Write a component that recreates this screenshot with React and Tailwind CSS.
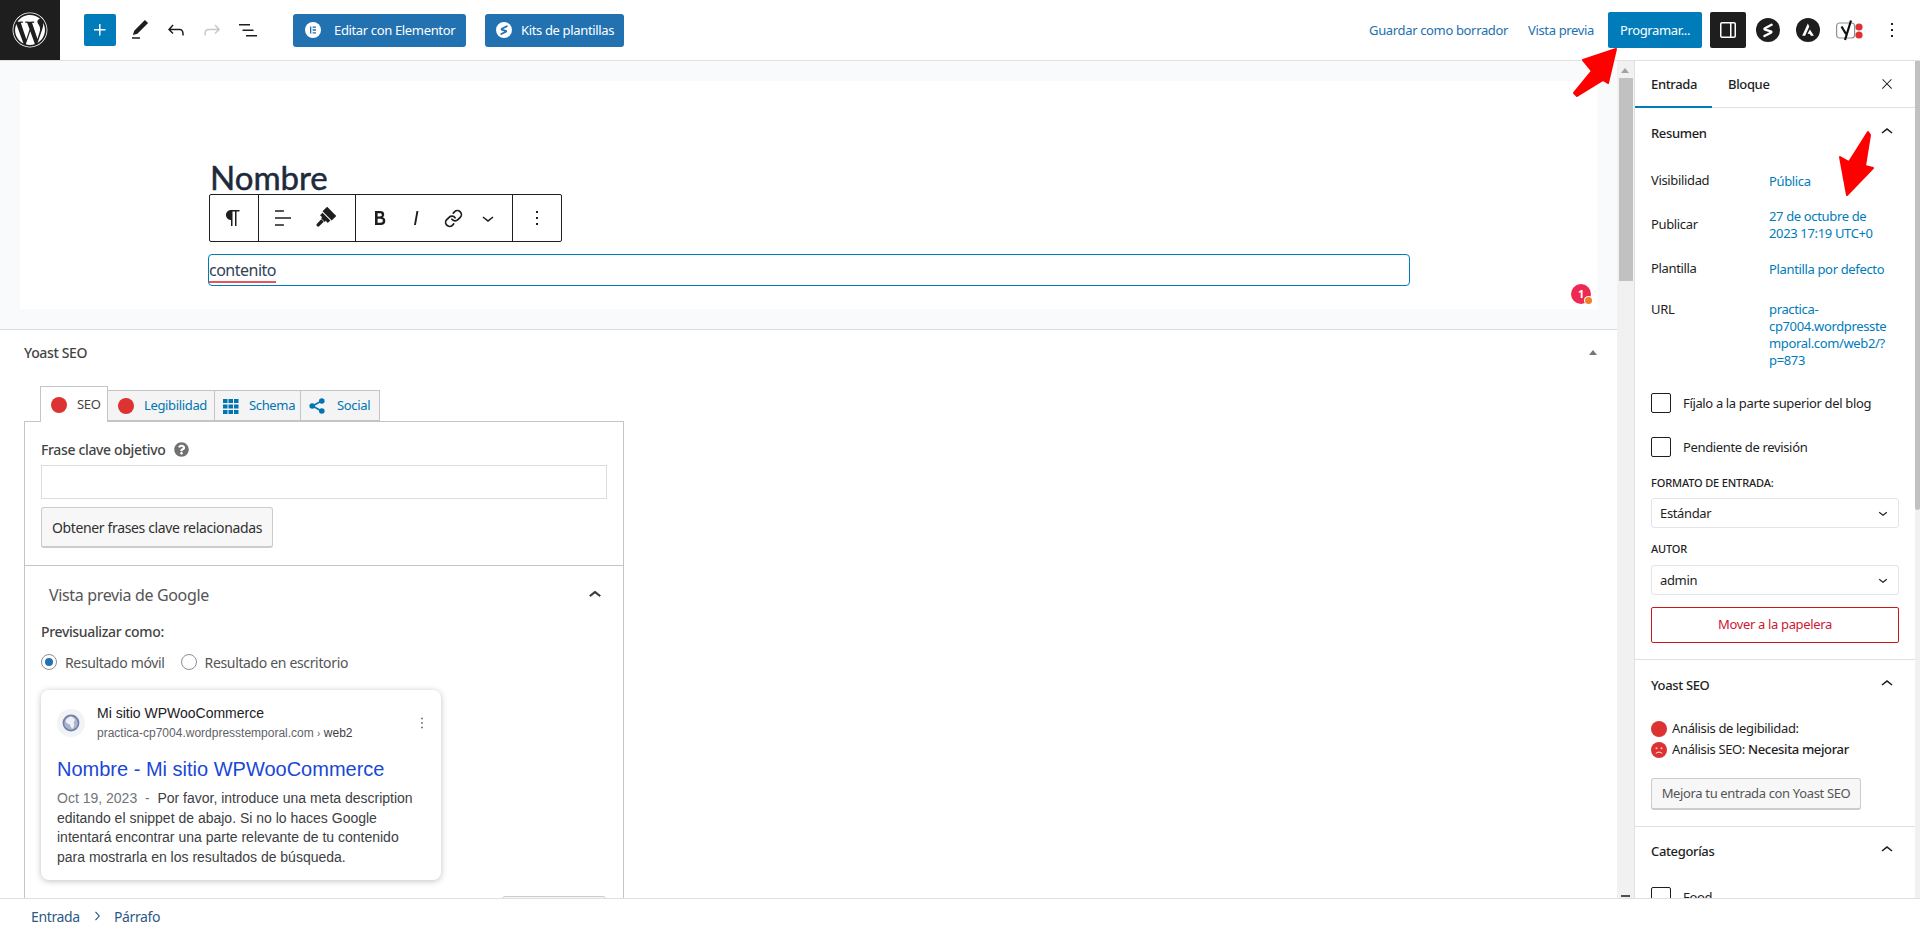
import React from "react";
import { FaWordpress, FaQuestionCircle } from "react-icons/fa";
import { Link as LinkIcon } from "lucide-react";

const Wp = ({ d, className = "w-6 h-6" }) => (
  <svg viewBox="0 0 24 24" className={className} fill="currentColor">
    <path d={d} />
  </svg>
);

const icons = {
  plus: "M11 12.5V17.5H12.5V12.5H17.5V11H12.5V6H11V11H6V12.5H11Z",
  edit: "M20.1 5.1L16.9 2 6.2 12.7l-1.3 4.4 4.5-1.3L20.1 5.1zM4 20.8h8v-1.5H4v1.5z",
  undo: "M18.3 11.7c-.6-.6-1.4-.9-2.3-.9H6.7l2.9-3.3-1.1-1-4.5 5L8.5 16l1-1-2.7-2.7H16c.5 0 .9.2 1.3.5 1 1 1 3.4 1 4.5v.3h1.5v-.2c0-1.5 0-4.3-1.5-5.7z",
  redo: "M15.6 6.5l-1.1 1 2.9 3.3H8c-.9 0-1.7.3-2.3.9-1.4 1.5-1.4 4.2-1.4 5.6v.2h1.5v-.3c0-1.1 0-3.5 1-4.5.3-.3.7-.5 1.3-.5h9.2L14.5 15l1.1 1.1 4.6-4.6-4.6-5z",
  list: "M3 6h11v1.5H3V6zm3.5 5.5h11V13h-11v-1.5zM21 17H10v1.5h11V17z",
  sidebar: "M18 4H6c-1.1 0-2 .9-2 2v12c0 1.1.9 2 2 2h12c1.1 0 2-.9 2-2V6c0-1.1-.9-2-2-2zm-4 14.5H6c-.3 0-.5-.2-.5-.5V6c0-.3.2-.5.5-.5h8v13zm4.5-.5c0 .3-.2.5-.5.5h-2.5v-13H18c.3 0 .5.2.5.5v12z",
  more: "M13 19h-2v-2h2v2zm0-6h-2v-2h2v2zm0-6h-2V5h2v2z",
  close: "M13 11.8l6.1-6.3-1-1-6.1 6.2-6.1-6.2-1 1 6.1 6.3-6.5 6.7 1 1 6.5-6.6 6.5 6.6 1-1z",
  up: "M6.5 12.4L12 8l5.5 4.4-.9 1.2L12 10l-4.5 3.6-1-1.2z",
  down: "M17.5 11.6L12 16l-5.5-4.4.9-1.2L12 14l4.5-3.6 1 1.2z",
  bold: "M14.7 11.3c1-.6 1.5-1.6 1.5-3 0-2.3-1.3-3.4-4-3.4H7v14h5.8c1.4 0 2.5-.3 3.3-1 .8-.7 1.2-1.7 1.2-2.9.1-1.9-.8-3.1-2.6-3.7zm-5.1-4h2.3c.6 0 1.1.1 1.4.4.3.3.5.7.5 1.2s-.2 1-.5 1.2c-.3.3-.8.4-1.4.4H9.6V7.3zm4.6 9c-.4.3-1 .4-1.7.4H9.6v-3.9h2.9c.7 0 1.3.2 1.7.5.4.3.6.8.6 1.5s-.2 1.2-.6 1.5z",
  italic: "M12.5 5L10 19h1.9l2.5-14z",
  para: "m9.99609 14v-.2251l.00391.0001v6.225h1.5v-14.5h2.5v14.5h1.5v-14.5h3v-1.5h-8.50391c-2.76142 0-5 2.23858-5 5 0 2.7614 2.23858 5 5 5z",
  align: "M4 19.8h8.9v-1.5H4v1.5zm8.9-15.6H4v1.5h8.9V4.2zm-8.9 7v1.5h16v-1.5H4z",
};

const BrushIcon = () => (
  <svg viewBox="0 0 24 24" className="w-6 h-6" fill="currentColor">
    <g transform="rotate(45 12 12)">
      <path d="M5.500 2.500h13v6.500h-13z" />
      <path d="M6.500 10h11v3.500h-3v1.500h-5v-1.500h-3z" />
      <path d="M10.300 15.500h3.400v6.200a1.700 1.700 0 0 1-3.400 0z" />
    </g>
  </svg>
);

const ElementorLogo = () => (
  <svg viewBox="0 0 16 16" className="w-4 h-4">
    <circle cx="8" cy="8" r="8" fill="#fff" />
    <path d="M5 4.500h1.300v7H5zM7.600 4.500h3.400v1.300H7.600zM7.600 7.350h3.400v1.300H7.600zM7.600 10.200h3.400v1.300H7.600z" fill="#2271b1" />
  </svg>
);

const KitsLogo = () => (
  <svg viewBox="0 0 16 16" className="w-4 h-4">
    <circle cx="8" cy="8" r="8" fill="#fff" />
    <path d="M10.800 4.200L6 6.700c-.6.3-.5.9.1 1.100l3.700 1c.6.2.6.700.1 1L5.300 12" fill="none" stroke="#2271b1" strokeWidth="1.800" strokeLinecap="round" strokeLinejoin="round" />
  </svg>
);

const StrattiLogo = () => (
  <svg viewBox="0 0 24 24" className="w-6 h-6">
    <circle cx="12" cy="12" r="12" fill="#1e1e1e" />
    <path d="M15.600 6.800L9 10.200c-.8.4-.7 1.200.1 1.500l5.700 1.600c.8.300.9 1 .1 1.400L8.400 18" fill="none" stroke="#fff" strokeWidth="2.400" strokeLinecap="round" strokeLinejoin="round" />
  </svg>
);

const AstraLogo = () => (
  <svg viewBox="0 0 24 24" className="w-6 h-6">
    <circle cx="12" cy="12" r="12" fill="#1e1e1e" />
    <path d="M11.800 5.500L6.200 17.800h2.900l4.200-9.200zM13.900 11.600l-2.300 4.200 2.300.1.900 1.900h3.100z" fill="#fff" />
  </svg>
);

const YoastLogo = () => (
  <svg viewBox="0 0 32 24" className="w-8 h-6">
    <rect x=".6" y="5" width="18" height="15" rx="3" fill="none" stroke="#8c8f94" strokeWidth="1.200" />
    <path d="M5.500 8.500l4.500 7.500M15 2.500L9 22" fill="none" stroke="#111" strokeWidth="2.200" />
    <circle cx="23" cy="9" r="3.600" fill="#dc3232" />
    <circle cx="23" cy="17" r="3.600" fill="#dc3232" />
  </svg>
);

const Dot = ({ className = "w-4 h-4" }) => <span className={`${className} rounded-full bg-[#dc3232] shrink-0`} />;

const GridIcon = () => (
  <svg viewBox="0 0 16 16" className="w-4 h-4" fill="#0075b3">
    {[0, 5.5, 11].map((y) =>
      [0, 5.5, 11].map((x) => <rect key={`${x}-${y}`} x={x} y={y + 1} width="4.5" height="4" />)
    )}
  </svg>
);

const ShareIcon = () => (
  <svg viewBox="0 0 16 16" className="w-4 h-4" fill="#0075b3">
    <path d="M12.500 3L3.500 8l9 5" fill="none" stroke="#0075b3" strokeWidth="1.600" />
    <circle cx="12.800" cy="3" r="2.800" />
    <circle cx="3.200" cy="8" r="2.800" />
    <circle cx="12.800" cy="13" r="2.800" />
  </svg>
);

const SadFace = () => (
  <svg viewBox="0 0 16 16" className="w-4 h-4 shrink-0">
    <circle cx="8" cy="8" r="8" fill="#dc3232" />
    <circle cx="5.500" cy="6.200" r="1" fill="#fff" opacity=".75" />
    <circle cx="10.500" cy="6.200" r="1" fill="#fff" opacity=".75" />
    <path d="M4.800 11.500c1.600-1.900 4.800-1.900 6.400 0" fill="none" stroke="#fff" strokeWidth="1.100" opacity=".75" />
  </svg>
);

const Globe = () => (
  <svg viewBox="0 0 18 18" className="w-[18px] h-[18px]">
    <circle cx="9" cy="9" r="7.600" fill="#a9b4cf" stroke="#6f7fa8" strokeWidth="1.600" />
    <path d="M9 2.500c3 1 4.500 3 3.500 4.500-1 1.300-1 1.500-.3 3 .5 1.500-.7 3.800-2.200 5-.6-2-2-2.500-2-4.500C6 9.500 4 9.500 3.500 7 4.500 4.500 6.500 3 9 2.500z" fill="#eef0f6" />
  </svg>
);

const Arrow = ({ className, viewBox, points }) => (
  <svg className={`absolute pointer-events-none ${className}`} viewBox={viewBox}>
    <polygon points={points} fill="#ff0000" stroke="#ff0000" strokeWidth="2" strokeLinejoin="round" />
  </svg>
);

const ToolBtn = ({ children, className = "" }) => (
  <span className={`absolute top-0 bottom-0 flex items-center justify-center ${className}`}>{children}</span>
);

const Select = ({ value }) => (
  <div className="h-[30px] rounded-[3px] border border-[#e2e4e7] flex items-center justify-between pl-2 pr-1.5 text-[#1e1e1e]">
    <span className="translate-y-px">{value}</span>
    <Wp d={icons.down} className="w-[18px] h-[18px]" />
  </div>
);

const Row = ({ label, children, className = "h-[44px] items-center" }) => (
  <div className={`flex ${className}`}>
    <span className="w-[118px] shrink-0 text-[#1e1e1e] translate-y-px">{label}</span>
    <span className="text-[#007cba] leading-[17px] translate-y-px">{children}</span>
  </div>
);

const Check = ({ label }) => (
  <div className="flex items-center h-5">
    <span className="w-5 h-5 rounded-[2px] border border-[#1e1e1e] mr-3 shrink-0" />
    <span className="text-[#1e1e1e] translate-y-px">{label}</span>
  </div>
);

const SectionHead = ({ title, className = "" }) => (
  <div className={`h-[50px] flex items-center justify-between ${className}`}>
    <span className="font-medium text-[#1e1e1e]">{title}</span>
    <Wp d={icons.up} className="w-6 h-6 -translate-y-0.5 text-[#1e1e1e]" />
  </div>
);

export default function App() {
  return (
    <div className="relative w-[1920px] h-[933px] overflow-hidden flex flex-col bg-white font-['Noto_Sans',sans-serif] text-[13px] tracking-[-0.35px] text-[#1e1e1e]">
      {/* barra superior */}
      <header className="h-[61px] shrink-0 border-b border-[#e0e0e0] flex items-center">
        <div className="w-[60px] h-[60px] bg-[#1e1e1e] flex items-center justify-center text-white">
          <FaWordpress className="w-9 h-9" />
        </div>
        <button className="ml-6 w-8 h-8 rounded-[2px] bg-[#007cba] text-white flex items-center justify-center">
          <Wp d={icons.plus} />
        </button>
        <div className="ml-3 flex items-center gap-3">
          <Wp d={icons.edit} />
          <Wp d={icons.undo} />
          <span className="text-[#c8c8c8]"><Wp d={icons.redo} /></span>
          <Wp d={icons.list} />
        </div>
        <button className="ml-[33px] h-[33px] w-[173px] rounded-[3px] bg-[#2271b1] text-white flex items-center pl-3">
          <ElementorLogo />
          <span className="ml-[13px] translate-y-px">Editar con Elementor</span>
        </button>
        <button className="ml-[19px] h-[33px] w-[139px] rounded-[3px] bg-[#2271b1] text-white flex items-center pl-[11px]">
          <KitsLogo />
          <span className="ml-[9px] translate-y-px">Kits de plantillas</span>
        </button>
        <div className="ml-auto flex items-center pr-4">
          <span className="text-[#2271b1] translate-y-px">Guardar como borrador</span>
          <span className="ml-5 text-[#2271b1] translate-y-px">Vista previa</span>
          <button className="ml-3.5 w-[94px] h-9 rounded-[2px] bg-[#007cba] text-white"><span className="inline-block translate-y-px">Programar...</span></button>
          <button className="ml-2 w-9 h-9 rounded-[2px] bg-[#1e1e1e] text-white flex items-center justify-center">
            <Wp d={icons.sidebar} />
          </button>
          <span className="ml-2.5"><StrattiLogo /></span>
          <span className="ml-4"><AstraLogo /></span>
          <span className="ml-4"><YoastLogo /></span>
          <span className="ml-3"><Wp d={icons.more} /></span>
        </div>
      </header>

      <div className="flex-1 min-h-0 flex">
        {/* columna del editor */}
        <main className="w-[1617px] shrink-0 overflow-hidden flex flex-col">
          <div className="h-[269px] shrink-0 bg-[#f9fafc] border-b border-[#dcdcde] pt-5 px-5">
            <div className="relative h-[228px] bg-white pl-[188px] pt-[75px]">
              <h1 className="h-[38px] leading-[38px] ml-[2px] text-[33px] font-['Lato',sans-serif] font-normal [-webkit-text-stroke:0.5px_#1e293b] translate-y-0.5 tracking-normal text-[#1e293b]">Nombre</h1>
              <div className="relative ml-[1px] w-[353px] h-[48px] bg-white border border-[#1e1e1e] rounded-[2px] text-[#1e1e1e]">
                <span className="absolute left-[48px] top-0 bottom-0 w-px bg-[#1e1e1e]" />
                <span className="absolute left-[145px] top-0 bottom-0 w-px bg-[#1e1e1e]" />
                <span className="absolute left-[302px] top-0 bottom-0 w-px bg-[#1e1e1e]" />
                <ToolBtn className="left-[11px] w-6"><Wp d={icons.para} /></ToolBtn>
                <ToolBtn className="left-[61px] w-6"><Wp d={icons.align} /></ToolBtn>
                <ToolBtn className="left-[103px] w-6"><BrushIcon /></ToolBtn>
                <ToolBtn className="left-[158px] w-6"><Wp d={icons.bold} /></ToolBtn>
                <ToolBtn className="left-[194px] w-6"><Wp d={icons.italic} /></ToolBtn>
                <ToolBtn className="left-[231px] w-6"><LinkIcon className="w-[19px] h-[19px]" strokeWidth={2.2} /></ToolBtn>
                <ToolBtn className="left-[266px] w-6"><Wp d={icons.down} /></ToolBtn>
                <ToolBtn className="left-[315px] w-6"><Wp d={icons.more} /></ToolBtn>
              </div>
              <div className="mt-3 w-[1202px] h-8 border-[1.5px] border-[#007cba] rounded-[4px] flex items-center text-[16px] tracking-[-0.5px] text-[#334155]">
                <span className="border-b-2 border-[#e8545f] leading-[21px] translate-y-[1px]">contenito</span>
              </div>
              <span className="absolute left-[1551px] top-[203px] w-5 h-5 rounded-full bg-[#ee2a52] text-white text-[11px] font-bold flex items-center justify-center">1</span>
              <span className="absolute left-[1565px] top-[216px] w-[7px] h-[7px] rounded-full bg-[#f08028] ring-1 ring-white" />
            </div>
          </div>

          <div className="flex-1 min-h-0 overflow-hidden">
            <div className="h-[44px] pl-6 pr-5 flex items-center justify-between">
              <span className="text-[14px] text-[#444] font-medium">Yoast SEO</span>
              <span className="w-0 h-0 border-x-[4px] border-x-transparent border-b-[5px] border-b-[#72777c]" />
            </div>
            <div className="mt-3 pl-6">
              <div className="flex items-end pl-4 h-[35px]">
                <div className="relative z-10 -mb-px w-[68px] h-[36px] bg-white border border-b-0 border-[#c3c4c7] flex items-center pl-2.5 gap-[10px] text-[#444]">
                  <Dot /><span>SEO</span>
                </div>
                <div className="w-[107px] h-[31px] bg-[#f4f4f4] border border-l-0 border-[#c3c4c7] flex items-center pl-2.5 gap-[10px] text-[#0075b3]">
                  <Dot /><span>Legibilidad</span>
                </div>
                <div className="w-[86px] h-[31px] bg-[#f4f4f4] border border-l-0 border-[#c3c4c7] flex items-center pl-2 gap-2.5 text-[#0075b3]">
                  <GridIcon /><span>Schema</span>
                </div>
                <div className="w-[79px] h-[31px] bg-[#f4f4f4] border border-l-0 border-[#c3c4c7] flex items-center pl-2 gap-3 text-[#0075b3]">
                  <ShareIcon /><span>Social</span>
                </div>
              </div>
              <div className="w-[600px] h-[600px] border border-[#c3c4c7] text-[14px]">
                <div className="pt-[18px] px-4 pb-[17px] border-b border-[#c3c4c7]">
                  <div className="h-[18px] flex items-center gap-[9px] font-medium text-[#444]">
                    <span>Frase clave objetivo</span>
                    <FaQuestionCircle className="w-[15px] h-[15px] text-[#707070]" />
                  </div>
                  <div className="mt-[7px] h-[34px] border border-[#ddd]" />
                  <button className="mt-2 w-[232px] h-[41px] rounded-[3px] bg-[#f7f7f7] border border-[#ccc] border-b-2 text-[#303030]">Obtener frases clave relacionadas</button>
                </div>
                <div className="pt-[18px] px-4">
                  <div className="flex items-center justify-between h-[22px]">
                    <span className="ml-2 text-[16px] text-[#555]">Vista previa de Google</span>
                    <Wp d={icons.up} className="w-6 h-6 stroke-[#303030] stroke-[0.6px] text-[#303030]" />
                  </div>
                  <div className="mt-[17px] h-[18px] leading-[18px] font-medium text-[#444]">Previsualizar como:</div>
                  <div className="mt-[13px] h-4 flex items-center text-[#555]">
                    <span className="w-4 h-4 rounded-full border border-[#8c8f94] flex items-center justify-center">
                      <span className="w-2 h-2 rounded-full bg-[#2271b1]" />
                    </span>
                    <span className="ml-2">Resultado móvil</span>
                    <span className="ml-4 w-4 h-4 rounded-full border border-[#8c8f94]" />
                    <span className="ml-2">Resultado en escritorio</span>
                  </div>
                  <div className="mt-5 w-[400px] h-[190px] rounded-lg bg-white shadow-[0_1px_6px_rgba(32,33,36,0.28)] px-4 pt-[13px] font-['Liberation_Sans',Arial,sans-serif] tracking-normal">
                    <div className="flex items-center h-10">
                      <span className="w-7 h-7 rounded-full bg-[#f1f3f4] flex items-center justify-center shrink-0"><Globe /></span>
                      <div className="ml-3 flex-1">
                        <div className="text-[14px] leading-5 text-[#202124]">Mi sitio WPWooCommerce</div>
                        <div className="text-[12px] leading-5 text-[#5f6368]">practica-cp7004.wordpresstemporal.com <span className="text-[10px]">›</span> <span className="text-[#3c4043]">web2</span></div>
                      </div>
                      <span className="text-[#4d5156] -mr-1.5"><Wp d={icons.more} className="w-[18px] h-[18px]" /></span>
                    </div>
                    <div className="mt-[13px] h-[26px] leading-[26px] text-[20px] text-[#1a47d6]">Nombre - Mi sitio WPWooCommerce</div>
                    <p className="mt-[7px] text-[14px] leading-[19.5px] text-[#3c4043] whitespace-nowrap">
                      <span className="text-[#70757a]">Oct 19, 2023&nbsp; -&nbsp; </span>Por favor, introduce una meta description<br />
                      editando el snippet de abajo. Si no lo haces Google<br />
                      intentará encontrar una parte relevante de tu contenido<br />
                      para mostrarla en los resultados de búsqueda.
                    </p>
                  </div>
                  <div className="mt-4 flex justify-end pr-[1px]">
                    <div className="w-[104px] h-8 rounded-[3px] bg-[#f7f7f7] border border-[#ccc]" />
                  </div>
                </div>
              </div>
            </div>
          </div>
        </main>

        {/* scrollbar del editor */}
        <div className="relative w-[17px] shrink-0 bg-[#f1f1f1]">
          <span className="absolute left-[4px] top-[7px] w-0 h-0 border-x-[4.5px] border-x-transparent border-b-[5px] border-b-[#a3a3a3]" />
          <div className="absolute left-[2px] right-[1px] top-[17px] h-[203px] bg-[#c1c1c1]" />
          <span className="absolute left-[4px] bottom-[1px] w-[9px] h-[2px] bg-[#505050]" />
        </div>

        {/* panel lateral */}
        <aside className="w-[281px] shrink-0 border-l border-[#e0e0e0] overflow-hidden">
          <div className="h-[47px] flex border-b border-[#e0e0e0] relative">
            <div className="w-[77px] h-[47px] border-b-2 border-[#007cba] flex items-center pl-4 font-medium"><span className="translate-y-px">Entrada</span></div>
            <div className="ml-4 h-[46px] flex items-center font-medium"><span className="translate-y-px">Bloque</span></div>
            <span className="ml-auto mr-5 mt-[15px]"><Wp d={icons.close} className="w-4 h-4" /></span>
          </div>

          <div className="px-4 pb-4 border-b border-[#e0e0e0]">
            <SectionHead title="Resumen" className="translate-y-px" />
            <Row label="Visibilidad">Pública</Row>
            <Row label="Publicar">27 de octubre de<br />2023 17:19 UTC+0</Row>
            <Row label="Plantilla">Plantilla por defecto</Row>
            <Row label="URL" className="mt-[10px] leading-[17px]">practica-<br />cp7004.wordpresste<br />mporal.com/web2/?<br />p=873</Row>
            <div className="mt-[25px]"><Check label="Fíjalo a la parte superior del blog" /></div>
            <div className="mt-6"><Check label="Pendiente de revisión" /></div>
            <div className="mt-[18px] h-4 leading-4 text-[11px] font-medium uppercase tracking-[-0.15px]">Formato de entrada:</div>
            <div className="mt-[7px]"><Select value="Estándar" /></div>
            <div className="mt-[13px] h-4 leading-4 text-[11px] font-medium uppercase tracking-[-0.15px]">Autor</div>
            <div className="mt-2"><Select value="admin" /></div>
            <button className="mt-3 w-full h-9 rounded-[2px] border border-[#cc1818] text-[#cc1833]">Mover a la papelera</button>
          </div>

          <div className="px-4 pb-4 border-b border-[#e0e0e0]">
            <SectionHead title="Yoast SEO" className="translate-y-px" />
            <div className="mt-2 h-[21px] flex items-center gap-[5px]"><Dot /><span>Análisis de legibilidad:</span></div>
            <div className="h-[21px] flex items-center gap-[5px]"><SadFace /><span>Análisis SEO: <span className="font-medium">Necesita mejorar</span></span></div>
            <button className="mt-[18px] w-[210px] h-[32px] rounded-[3px] bg-[#f7f7f7] border border-[#ccc] border-b-2 text-[#555]">Mejora tu entrada con Yoast SEO</button>
          </div>

          <div className="px-4">
            <SectionHead title="Categorías" />
            <div className="mt-2.5"><Check label="Food" /></div>
          </div>
        </aside>

        {/* scrollbar del panel */}
        <div className="relative w-[5px] shrink-0 bg-[#f1f1f1]">
          <div className="h-[449px] bg-[#c1c1c1] rounded-b-[3px]" />
        </div>
      </div>

      <footer className="relative z-10 h-[35px] shrink-0 bg-white border-t border-[#e0e0e0] flex items-center pl-[31px] text-[14px] text-[#2c5a85]">
        <span>Entrada</span>
        <span className="ml-[8px] mr-[8px]"><Wp d="M10.600 6L9.400 7l4.600 5-4.600 5 1.200 1 5.400-6z" className="w-[18px] h-[18px]" /></span>
        <span>Párrafo</span>
      </footer>

      <Arrow
        className="left-[1570px] top-[45px] w-[50px] h-[55px]"
        viewBox="1570 45 50 55"
        points="1616,49 1583,60 1592,71 1574,93 1577,96 1603,80 1608,83"
      />
      <Arrow
        className="left-[1835px] top-[128px] w-[42px] h-[70px]"
        viewBox="1835 128 42 70"
        points="1868,132 1870,135 1865,166 1873,168 1847,195 1840,157 1849,162"
      />
    </div>
  );
}
